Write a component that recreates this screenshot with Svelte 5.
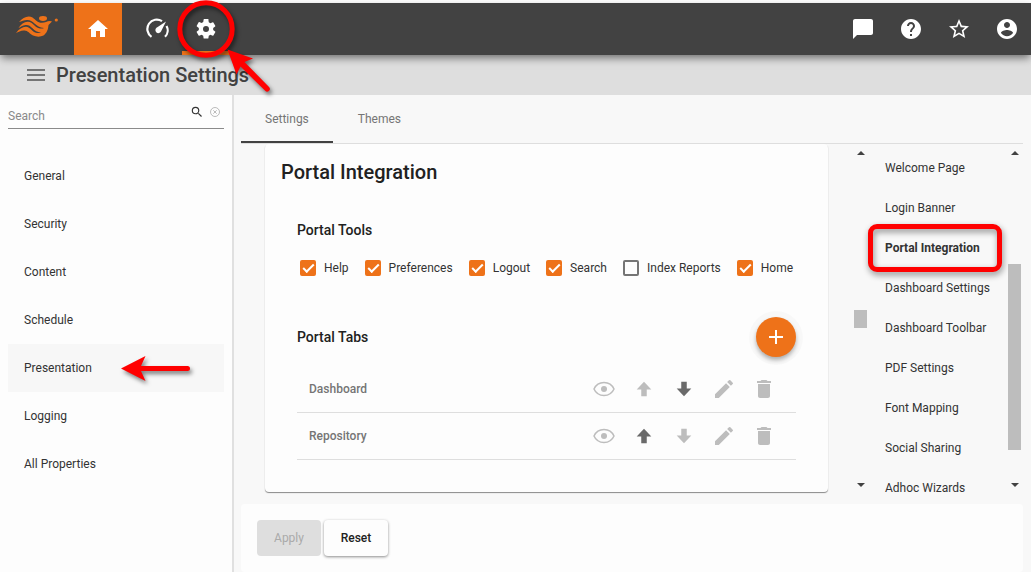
<script>
  const categories = ['General', 'Security', 'Content', 'Schedule', 'Presentation', 'Logging', 'All Properties'];
  let category = $state('Presentation');

  const sections = [
    'Welcome Page', 'Login Banner', 'Portal Integration', 'Dashboard Settings', 'Dashboard Toolbar',
    'PDF Settings', 'Font Mapping', 'Social Sharing', 'Adhoc Wizards'
  ];
  let section = $state('Portal Integration');

  let tools = $state([
    { label: 'Help', on: true },
    { label: 'Preferences', on: true },
    { label: 'Logout', on: true },
    { label: 'Search', on: true },
    { label: 'Index Reports', on: false },
    { label: 'Home', on: true }
  ]);

  const tabs = ['Dashboard', 'Repository'];

  const icons = {
    home: 'M10 20v-6h4v6h5v-8h3L12 3 2 12h3v8z',
    gear: 'M19.14 12.94c.04-.3.06-.61.06-.94s-.02-.64-.07-.94l2.03-1.58a.49.49 0 0 0 .12-.61l-1.92-3.32a.49.49 0 0 0-.59-.22l-2.39.96a7 7 0 0 0-1.62-.94l-.36-2.54A.48.48 0 0 0 13.92 2h-3.84a.48.48 0 0 0-.47.41l-.36 2.54c-.59.24-1.13.57-1.62.94l-2.39-.96a.48.48 0 0 0-.59.22L2.74 8.87a.48.48 0 0 0 .12.61l2.03 1.58c-.05.3-.09.63-.09.94s.02.64.07.94l-2.03 1.58a.49.49 0 0 0-.12.61l1.92 3.32c.12.22.37.29.59.22l2.39-.96c.5.38 1.03.7 1.62.94l.36 2.54c.05.24.24.41.48.41h3.84c.24 0 .44-.17.47-.41l.36-2.54a6.6 6.6 0 0 0 1.62-.94l2.39.96c.22.08.47 0 .59-.22l1.92-3.32a.48.48 0 0 0-.12-.61zM12 15a3 3 0 1 1 0-6 3 3 0 0 1 0 6z',
    chat: 'M20 2H4c-1.1 0-2 .9-2 2v18l4-4h14c1.1 0 2-.9 2-2V4c0-1.1-.9-2-2-2z',
    help: 'M12 2C6.48 2 2 6.48 2 12s4.48 10 10 10 10-4.48 10-10S17.52 2 12 2zm1 17h-2v-2h2v2zm2.07-7.75-.9.92C13.45 12.9 13 13.5 13 15h-2v-.5c0-1.1.45-2.1 1.17-2.83l1.24-1.26c.37-.36.59-.86.59-1.41 0-1.1-.9-2-2-2s-2 .9-2 2H8c0-2.21 1.79-4 4-4s4 1.79 4 4c0 .88-.36 1.68-.93 2.25z',
    star: 'M22 9.24l-7.19-.62L12 2 9.19 8.63 2 9.24l5.46 4.73L5.82 21 12 17.27 18.18 21l-1.63-7.03zM12 15.4l-3.76 2.27 1-4.28-3.32-2.88 4.38-.38L12 6.1l1.71 4.04 4.38.38-3.32 2.88 1 4.28z',
    user: 'M12 2C6.48 2 2 6.48 2 12s4.48 10 10 10 10-4.48 10-10S17.52 2 12 2zm0 3c1.66 0 3 1.34 3 3s-1.34 3-3 3-3-1.34-3-3 1.34-3 3-3zm0 14.2c-2.5 0-4.71-1.28-6-3.22.03-1.99 4-3.08 6-3.08 1.99 0 5.97 1.09 6 3.08-1.29 1.94-3.5 3.22-6 3.22z',
    up: 'M12 4 4 12.500H9V20h6v-7.500h5z',
    down: 'M12 20 4 11.500H9V4h6v7.500h5z',
    pencil: 'M3 17.25V21h3.75L17.81 9.94l-3.75-3.75zM20.71 7.04a1 1 0 0 0 0-1.41l-2.34-2.34a1 1 0 0 0-1.41 0l-1.83 1.83 3.75 3.75z',
    trash: 'M6 19c0 1.1.9 2 2 2h8c1.1 0 2-.9 2-2V7H6zM19 4h-3.5l-1-1h-5l-1 1H5v2h14z',
    search: 'M15.5 14h-.79l-.28-.27A6.47 6.47 0 0 0 16 9.5 6.5 6.5 0 1 0 9.5 16c1.61 0 3.09-.59 4.23-1.57l.27.28v.79l5 4.99L20.49 19zm-6 0a4.5 4.5 0 1 1 0-9 4.5 4.5 0 0 1 0 9z'
  };
</script>

{#snippet icon(name, size)}
  <svg width={size} height={size} viewBox="0 0 24 24" fill="currentColor" aria-hidden="true"><path d={icons[name]} /></svg>
{/snippet}

{#snippet scrollbar(position, length)}
  <div class="scrollbar" aria-hidden="true">
    <svg width="8" height="4" viewBox="0 0 8 4"><path d="M0 4 4 0l4 4z" /></svg>
    <div class="track"><span style:top="{position}%" style:height="{length}%"></span></div>
    <svg width="8" height="4" viewBox="0 0 8 4"><path d="M0 0h8L4 4z" /></svg>
  </div>
{/snippet}

<div class="page">
  <header>
    <svg class="logo" width="46" height="28" viewBox="0 0 46 28" aria-label="Logo" role="img">
      <g fill="#ee7219">
        <ellipse cx="27" cy="5.500" rx="4" ry="2.400" />
        <circle cx="40.300" cy="7" r="1.600" />
        <path d="M3 9C7 4.500 12 2 16.500 4.500c3.500 2.500 5 5.500 9.500 5.300 3 0 5-1.800 8-1.800l2 .5-3.500 3.500c-.3 4-1.500 8-5 10.500-3 1.500-7 1.500-10.500 0-3.500-1.700-5-5-8.500-5-3.500-.3-6 1.500-8.500 2.500 3-4 6.500-6.300 10-6.200 4.500.2 6 5.200 10 6 2 .5 3.800.2 5-.5-4 0-6-1.500-8.500-4C14 12.500 12 11.500 9.500 12c-3 .5-5 2-7 3 2.500-4 6-6.500 9.500-6.200 5 .4 7 6 12 6.700 1.500.2 3 0 4-.5-4.500-.2-7-2.300-9.500-4.500C16 8.300 14 6.800 11 7c-3 .2-5.500 1.200-8 2z" />
      </g>
    </svg>
    <button class="tool home" aria-label="Home">{@render icon('home', 24)}</button>
    <button class="tool" aria-label="Monitor">
      <svg width="24" height="24" viewBox="0 0 24 24" aria-hidden="true">
        <path d="M5.500 19.800A9 9 0 0 1 16 4.200M20.500 9A9 9 0 0 1 19 19.800" fill="none" stroke="currentColor" stroke-width="2.2" />
        <path d="M20 4.500 15 14.600a3 3 0 1 1-4.500-3.800z" fill="currentColor" />
      </svg>
    </button>
    <button class="tool current" aria-label="Settings">
      {@render icon('gear', 24)}
      <svg class="ring" width="110" height="104" viewBox="0 0 110 104" aria-hidden="true">
        <circle cx="42" cy="36" r="26.200" fill="none" stroke="#f00" stroke-width="5" />
        <path d="M63.500 56.500 89 65.500 80.500 69 105 94a2.600 2.600 0 0 1-3.800 3.800L76.500 73.500l-4 8z" fill="#f00" />
      </svg>
    </button>
    <span class="spacer"></span>
    <button class="tool" aria-label="Messages">{@render icon('chat', 24)}</button>
    <button class="tool" aria-label="Help">{@render icon('help', 24)}</button>
    <button class="tool" aria-label="Favorites">{@render icon('star', 24)}</button>
    <button class="tool" aria-label="Account">{@render icon('user', 24)}</button>
  </header>

  <div class="titlebar">
    <button class="menu" aria-label="Toggle menu"><i></i><i></i><i></i></button>
    <h1>Presentation Settings</h1>
  </div>

  <div class="body">
    <aside>
      <div class="search">
        <input type="text" placeholder="Search" aria-label="Search" />
        <button aria-label="Run search">{@render icon('search', 14)}</button>
        <button class="clear" aria-label="Clear search">
          <svg width="10" height="10" viewBox="0 0 10 10" fill="none" stroke="currentColor" stroke-width="0.8" aria-hidden="true">
            <circle cx="5" cy="5" r="4.500" /><path d="M3.300 3.300l3.400 3.400M6.700 3.300 3.300 6.700" />
          </svg>
        </button>
      </div>
      <nav>
        {#each categories as name}
          <a href="#{name}" class:selected={name === category} onclick={() => (category = name)}>
            {name}
            {#if name === category}
              <svg class="pointer" width="72" height="32" viewBox="0 0 72 32" aria-hidden="true">
                <path d="M1 16.500 25.500 4l-4.500 10H67.500a2.500 2.500 0 0 1 0 5H21L25.500 29z" fill="#f00" />
              </svg>
            {/if}
          </a>
        {/each}
      </nav>
    </aside>

    <main>
      <div class="tabs" role="tablist">
        <button role="tab" aria-selected="true" class="active">Settings</button>
        <button role="tab" aria-selected="false">Themes</button>
      </div>

      <div class="content">
        <section class="card">
          <h2>Portal Integration</h2>
          <div class="group">
            <h3>Portal Tools</h3>
            <div class="checks">
              {#each tools as tool}
                <label><input type="checkbox" bind:checked={tool.on} />{tool.label}</label>
              {/each}
            </div>
            <div class="listhead">
              <h3>Portal Tabs</h3>
              <button class="add" aria-label="Add tab">
                <svg width="16" height="16" viewBox="0 0 16 16" aria-hidden="true"><path d="M7 1h2v6h6v2H9v6H7V9H1V7h6z" fill="#fff" /></svg>
              </button>
            </div>
            <ul>
              {#each tabs as tab, i}
                <li>
                  <span>{tab}</span>
                  <button aria-label="Show {tab}">
                    <svg width="22" height="16" viewBox="0 0 22 16" aria-hidden="true">
                      <path d="M1 8C3 3.500 6.500 1.500 11 1.500S19 3.500 21 8c-2 4.500-5.500 6.500-10 6.500S3 12.500 1 8z" fill="none" stroke="currentColor" stroke-width="1.5" />
                      <circle cx="11" cy="8" r="3" fill="currentColor" />
                    </svg>
                  </button>
                  <button aria-label="Move {tab} up" class:enabled={i > 0}>{@render icon('up', 22)}</button>
                  <button aria-label="Move {tab} down" class:enabled={i < tabs.length - 1}>{@render icon('down', 22)}</button>
                  <button aria-label="Edit {tab}">{@render icon('pencil', 24)}</button>
                  <button aria-label="Delete {tab}">{@render icon('trash', 24)}</button>
                </li>
              {/each}
            </ul>
          </div>
        </section>

        {@render scrollbar(47, 6)}
        <nav class="sections">
          {#each sections as name}
            <a href="#{name}" class:selected={name === section} onclick={() => (section = name)}>{name}</a>
          {/each}
        </nav>
        {@render scrollbar(32, 61)}
      </div>

      <footer>
        <button disabled>Apply</button>
        <button>Reset</button>
      </footer>
    </main>
  </div>
</div>

<style>
  :global(body) { margin: 0; background: #fdfdfd; }
  .page {
    display: flex; flex-direction: column; box-sizing: border-box; height: 100vh; padding-top: 3px; overflow: hidden;
    font-family: Roboto, sans-serif; font-size: 12px; line-height: 16px; color: #333;
  }
  button { padding: 0; border: 0; background: none; font: inherit; color: inherit; cursor: pointer; }
  h1, h2, h3 { margin: 0; font-weight: 500; }
  a { color: inherit; text-decoration: none; }
  svg { display: block; }

  header {
    position: relative; z-index: 2; flex: none; display: flex; height: 52px; background: #424242; color: #fff;
    box-shadow: 0 4px 8px -1px rgba(0, 0, 0, .5);
  }
  .logo { margin: 10px 12px 0 16px; }
  .tool { position: relative; display: flex; align-items: center; justify-content: center; width: 48px; height: 52px; }
  .home { margin-right: 12px; background: #ee7219; }
  .current { box-shadow: inset 0 -4px #ee7219; }
  .spacer { flex: 1; }
  .ring { position: absolute; left: -18px; top: -10px; z-index: 3; filter: drop-shadow(2px 3px 2px rgba(0, 0, 0, .5)); pointer-events: none; }

  .titlebar { flex: none; display: flex; align-items: center; gap: 11px; height: 40px; padding-left: 27px; background: #dedede; }
  .menu { display: grid; gap: 3px; width: 18px; }
  .menu i { height: 2px; background: #757575; }
  h1 { font-size: 20px; line-height: 24px; color: #424242; }

  .body { flex: 1; display: flex; min-height: 0; }
  aside { flex: none; width: 216px; padding: 0 8px; border-right: 2px solid #e0e0e0; background: #fdfdfd; }
  .search { display: flex; gap: 6px; height: 33px; padding-right: 4px; border-bottom: 1px solid #8a8a8a; }
  .search input { flex: 1; min-width: 0; padding: 8px 0 0; border: 0; outline: 0; background: none; font: inherit; color: inherit; }
  .search input::placeholder { color: #8a8a8a; }
  .search .clear { color: #aaa; }
  aside nav { padding-top: 23px; }
  aside nav a { position: relative; display: block; padding: 16px; }
  aside nav .selected { background: #f7f7f7; }
  .pointer { position: absolute; left: 112px; top: 8px; filter: drop-shadow(2px 3px 2px rgba(0, 0, 0, .5)); }

  main { flex: 1; display: flex; flex-direction: column; min-width: 0; padding: 0 8px 0 7px; background: #f8f8f8; }
  .tabs { flex: none; display: flex; gap: 1px; height: 48px; border-bottom: 1px solid #dedede; }
  .tabs button { padding: 2px 24px 0; font-weight: 400; color: #757575; border-bottom: 2px solid transparent; }
  .tabs .active { border-color: #424242; }

  .content { flex: 1; display: flex; min-height: 0; padding-left: 24px; overflow: hidden; }
  .card {
    flex: 1; box-sizing: border-box; min-width: 0; margin: 0 26px 12px 0; padding: 16px; border-radius: 4px;
    background: #fdfdfd; box-shadow: 0 1px 1px rgba(0, 0, 0, .45);
  }
  h2 { font-size: 20px; line-height: 24px; color: #212121; }
  .group { padding: 36px 16px 0; }
  h3 { font-size: 14px; line-height: 20px; color: #212121; }
  .checks { display: flex; gap: 16px; padding: 20px 3px 0; white-space: nowrap; }
  .checks label { display: flex; align-items: center; gap: 8px; }
  .checks input {
    appearance: none; box-sizing: border-box; width: 16px; height: 16px; margin: 0; border: 2px solid #757575; border-radius: 2px;
  }
  .checks input:checked { border-color: #ee7219; background: #ee7219; }
  .checks input:checked::after {
    content: ''; display: block; box-sizing: border-box; width: 11px; height: 6px; margin: 2px 1px;
    border: solid #fff; border-width: 0 0 2px 2px; transform: rotate(-45deg);
  }
  .listhead { display: flex; align-items: center; justify-content: space-between; padding: 41px 0 9px; }
  .add {
    display: flex; align-items: center; justify-content: center; width: 40px; height: 40px; border-radius: 50%; background: #ee7219;
    box-shadow: 0 3px 4px rgba(0, 0, 0, .3), 0 1px 0 7px rgba(0, 0, 0, .02);
  }
  ul { margin: 0; padding: 0; list-style: none; }
  li { display: flex; align-items: center; height: 46px; padding-left: 12px; border-bottom: 1px solid #dedede; color: #757575; }
  li span { flex: 1; font-weight: 500; }
  li button { display: flex; align-items: center; justify-content: center; width: 40px; height: 40px; color: #bdbdbd; }
  li button:last-child { margin-right: 12px; }
  li .enabled { color: #6a6a6a; }

  .scrollbar { flex: none; display: flex; flex-direction: column; align-items: center; gap: 12px; width: 13px; padding: 7px 0 17px; }
  .scrollbar svg { flex: none; fill: #424242; }
  .track { position: relative; flex: 1; width: 13px; }
  .track span { position: absolute; left: 0; width: 100%; background: #bdbdbd; }
  .sections { flex: none; width: 123px; padding: 4px 0 0 18px; }
  .sections + .scrollbar { margin-right: 2px; }
  .sections a { position: relative; display: block; padding: 12px 0; white-space: nowrap; }
  .sections .selected { font-weight: 700; }
  .sections .selected::after {
    content: ''; position: absolute; left: -17px; right: 6px; top: -4px; bottom: -4px; box-sizing: border-box; border: 5px solid #f00; border-radius: 9px;
    filter: drop-shadow(1px 3px 3px rgba(0, 0, 0, .45)); pointer-events: none;
  }

  footer { flex: none; display: flex; gap: 3px; padding: 16px; border-radius: 4px; background: #fdfdfd; }
  footer button { min-width: 64px; height: 36px; border-radius: 4px; background: #fdfdfd; color: #212121; font-weight: 500; box-shadow: 0 1px 3px rgba(0, 0, 0, .45); }
  footer button:disabled { background: #dedede; color: #aaa; font-weight: 400; box-shadow: none; }
</style>
